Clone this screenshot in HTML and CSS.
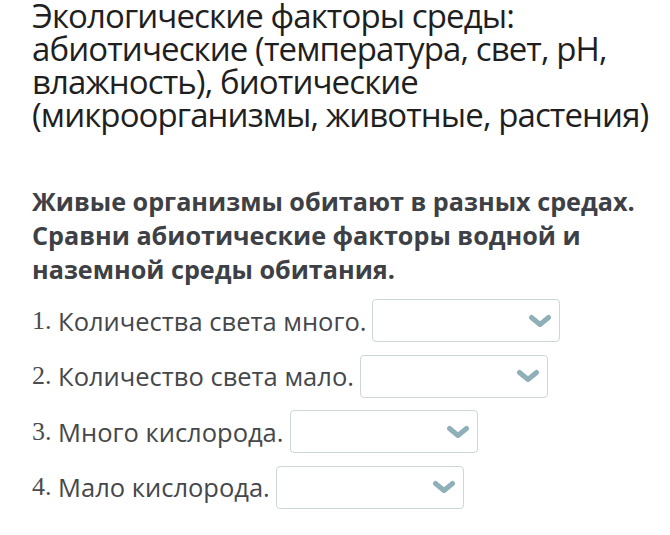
FILE: index.html
```html
<!DOCTYPE html>
<html lang="ru">
<head>
<meta charset="utf-8">
<link rel="stylesheet" href="styles.css">
</head>
<body>
<div class="page">
  <h1 class="title">Экологические факторы среды: абиотические (температура, свет, pH, влажность), биотические (микроорганизмы, животные, растения)</h1>
  <p class="task">Живые организмы обитают в разных средах. Сравни абиотические факторы водной и наземной среды обитания.</p>
  <ol class="items">
    <li class="item"><span class="num">1.</span> Количества света много.<span class="select"><svg class="chev" viewBox="0 0 24 14"><path d="M3.5 3.5 L12 10.5 L20.5 3.5" /></svg></span></li>
    <li class="item"><span class="num">2.</span> Количество света мало.<span class="select"><svg class="chev" viewBox="0 0 24 14"><path d="M3.5 3.5 L12 10.5 L20.5 3.5" /></svg></span></li>
    <li class="item"><span class="num">3.</span> Много кислорода.<span class="select"><svg class="chev" viewBox="0 0 24 14"><path d="M3.5 3.5 L12 10.5 L20.5 3.5" /></svg></span></li>
    <li class="item"><span class="num">4.</span> Мало кислорода.<span class="select"><svg class="chev" viewBox="0 0 24 14"><path d="M3.5 3.5 L12 10.5 L20.5 3.5" /></svg></span></li>
  </ol>
</div>
</body>
</html>
```
FILE: styles.css
```css
html, body {
  margin: 0;
  padding: 0;
  background: #ffffff;
}
.page {
  padding: 0 0 0 32px;
  font-family: "Open Sans", "Noto Sans", sans-serif;
}
.title {
  margin: -1px 0 0 0;
  font-weight: 400;
  font-size: 33px;
  line-height: 33px;
  color: #1f1f1f;
  letter-spacing: -0.9px;
}
.task {
  margin: 53px 0 0 0;
  font-weight: 700;
  font-size: 25.2px;
  line-height: 34px;
  color: #3d4045;
  width: 630px;
}
.items {
  list-style: none;
  margin: 13px 0 0 0;
  padding: 0;
}
.item {
  display: flex;
  align-items: center;
  height: 43px;
  margin-bottom: 12.5px;
  font-size: 25.5px;
  color: #45474a;
  white-space: pre;
}
.num {
  font-family: "Liberation Serif", serif;
  font-size: 26px;
  color: #4a4c4f;
}
.select {
  display: inline-flex;
  align-items: center;
  justify-content: flex-end;
  box-sizing: border-box;
  width: 188px;
  height: 43px;
  margin-left: 6px;
  padding-right: 7px;
  border: 1px solid #cdd6d9;
  border-radius: 4px;
  background: #fff;
}
.chev {
  width: 24px;
  height: 14px;
}
.chev path {
  fill: none;
  stroke: #8fb0b8;
  stroke-width: 5;
  stroke-linecap: round;
  stroke-linejoin: round;
}
```
